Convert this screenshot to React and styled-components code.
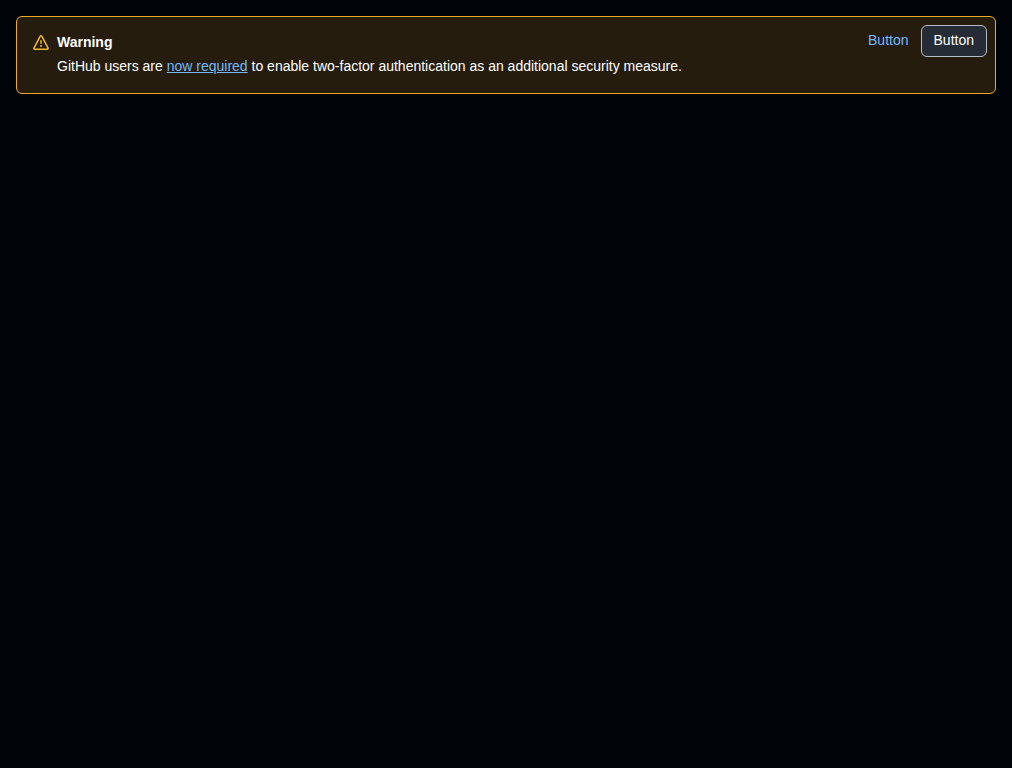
import React from 'react';
import styled, { createGlobalStyle } from 'styled-components';

const GlobalStyle = createGlobalStyle`
  body {
    margin: 0;
    padding: 16px;
    background: #010409;
    color: #ffffff;
    font-family: "Liberation Sans", Arial, sans-serif;
    font-size: 14px;
    line-height: 20px;
  }
`;

const Banner = styled.section`
  display: grid;
  grid-template-columns: auto minmax(0, 1fr) auto;
  align-items: start;
  box-sizing: border-box;
  padding: 8px;
  border: 1px solid #edaa27;
  border-radius: 6px;
  background: #251c0e;
`;

const IconSlot = styled.div`
  display: grid;
  place-items: center;
  padding: 8px;

  svg {
    display: block;
    width: 16px;
    height: 20px;
    fill: #f0b72f;
  }
`;

const Content = styled.div`
  display: grid;
  row-gap: 4px;
  padding: 7px 0 9px;
`;

const Title = styled.h2`
  margin: 0;
  font-size: 14px;
  font-weight: 600;
  line-height: 20px;
`;

const Message = styled.p`
  margin: 0;
`;

const Link = styled.a`
  color: #74b9ff;
  text-decoration: underline;
`;

const Actions = styled.div`
  display: flex;
`;

const Button = styled.button`
  box-sizing: border-box;
  height: 32px;
  padding: 0 12px 2px;
  margin-right: ${({ $invisible }) => ($invisible ? '-1px' : '0')};
  border: 1px solid ${({ $invisible }) => ($invisible ? 'transparent' : '#b7bdc8')};
  border-radius: 6px;
  background: ${({ $invisible }) => ($invisible ? 'transparent' : '#262c36')};
  color: ${({ $invisible }) => ($invisible ? '#74b9ff' : '#ffffff')};
  font: 500 14px/20px "Liberation Sans", Arial, sans-serif;
  cursor: pointer;
`;

function AlertIcon() {
  return (
    <svg viewBox="0 0 16 16" aria-hidden="true">
      <path d="M6.457 1.047c.659-1.234 2.427-1.234 3.086 0l6.082 11.378A1.75 1.75 0 0 1 14.082 15H1.918a1.75 1.75 0 0 1-1.543-2.575Zm1.763.707a.25.25 0 0 0-.44 0L1.698 13.132a.25.25 0 0 0 .22.368h12.164a.25.25 0 0 0 .22-.368Zm.53 3.996v2.5a.75.75 0 0 1-1.5 0v-2.5a.75.75 0 0 1 1.5 0ZM9 11a1 1 0 1 1-2 0 1 1 0 0 1 2 0Z" />
    </svg>
  );
}

export default function App() {
  return (
    <>
      <GlobalStyle />
      <Banner aria-labelledby="banner-title">
        <IconSlot>
          <AlertIcon />
        </IconSlot>
        <Content>
          <Title id="banner-title">Warning</Title>
          <Message>
            GitHub users are <Link href="#">now required</Link> to enable two-factor
            authentication as an additional security measure.
          </Message>
        </Content>
        <Actions>
          <Button type="button" $invisible>Button</Button>
          <Button type="button">Button</Button>
        </Actions>
      </Banner>
    </>
  );
}
